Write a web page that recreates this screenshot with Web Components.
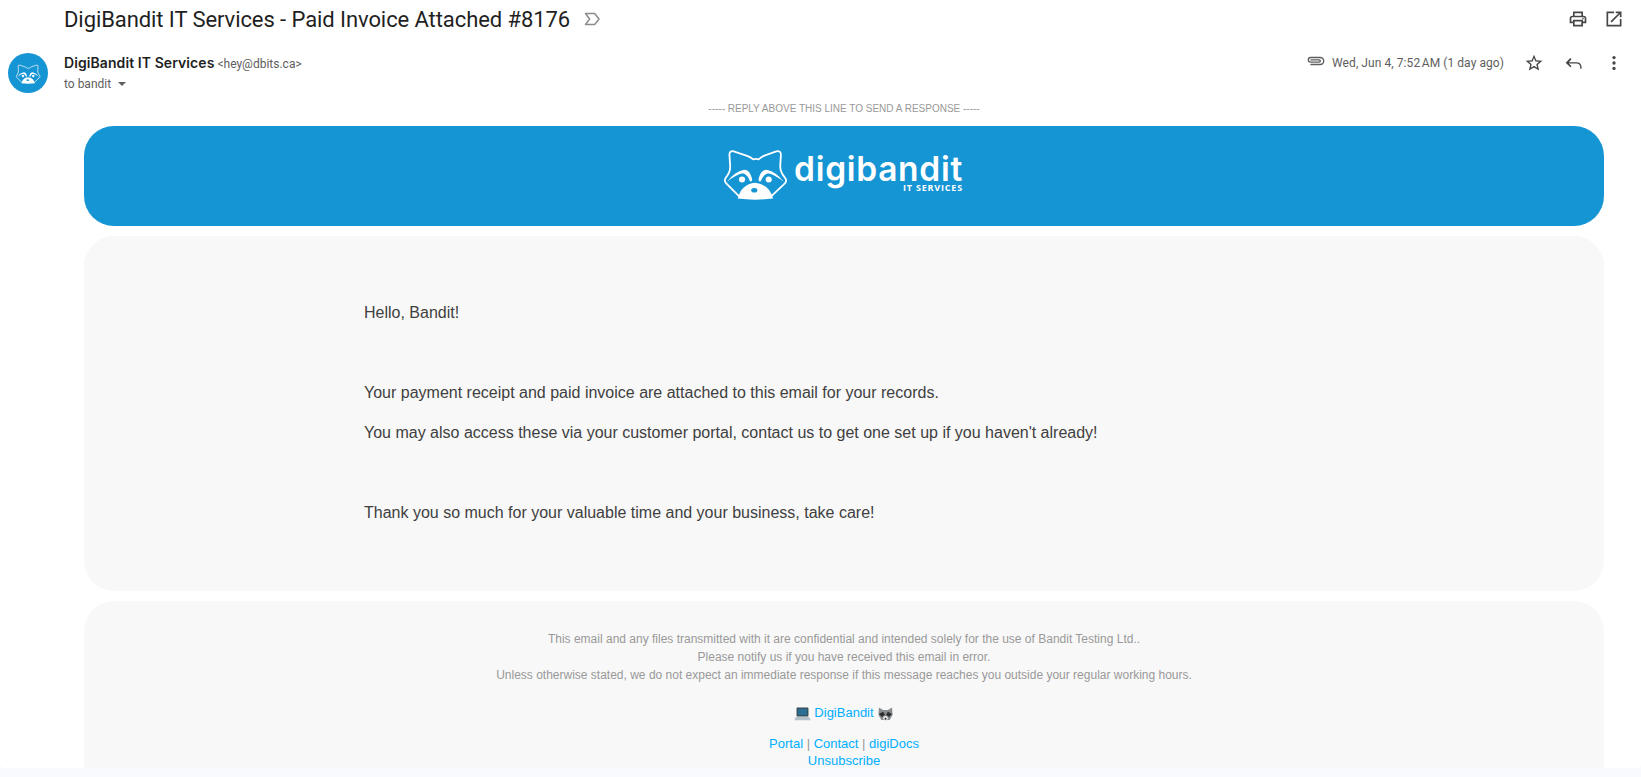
<!DOCTYPE html>
<html>
<head>
<meta http-equiv="Content-Type" content="text/html; charset=utf-8">
<title>DigiBandit IT Services - Paid Invoice Attached #8176</title>
<style>
    html, body { margin: 0; height: 100%; background: #f8fafd; overflow: hidden; }
</style>

<template id="raccoon-tpl">
    <style>
        :host { display: inline-block; line-height: 0; }
        svg { width: 100%; height: 100%; display: block; }
    </style>
    <svg viewBox="0 0 216 150">
        <path d="M62 138 L28 104 Q21 96 27 88 Q40 72 39 56 L37 24 Q37 12 49 15 L88 28 Q97 32 103 37 Q110 35 118 37 Q126 30 136 26 L167 15 Q180 12 180 24 L178 56 Q178 72 191 88 Q198 96 191 104 L155 138" fill="none" stroke="#fff" stroke-width="5" stroke-linejoin="round" stroke-linecap="round"/>
        <path d="M30 100 Q50 72 78 66 Q94 66 100 92 Q101 100 94 98 Q88 80 74 76 Q54 80 30 100 Z" fill="#fff"/>
        <path d="M188 100 Q168 72 140 66 Q124 66 118 92 Q117 100 124 98 Q130 80 144 76 Q164 80 188 100 Z" fill="#fff"/>
        <circle cx="72" cy="93" r="8.5" fill="#fff"/>
        <circle cx="146" cy="93" r="8.5" fill="#fff"/>
        <path d="M60 146 Q70 106 108 102 Q148 106 158 146 Q108 152 60 146 Z" fill="#fff"/>
        <ellipse cx="106" cy="123" rx="8.5" ry="6.5" fill="#1695d4"/>
    </svg>
</template>

<script type="text/javascript">
    // every element just clones its markup into an open shadow root
    function tplRoot(el, html) {
        el.attachShadow({mode: 'open'}).innerHTML = html;
    }

    const GICON = 'fill="#444746"';

    customElements.define('bandit-raccoon', class extends HTMLElement {
        constructor() {
            super();
            let tpl = document.getElementById('raccoon-tpl');
            this.attachShadow({mode: 'open'}).appendChild(tpl.content.cloneNode(true));
        }
    });

    customElements.define('mail-subject', class extends HTMLElement {
        constructor() {
            super();
            tplRoot(this, `
            <style>
                :host { display: flex; align-items: center; height: 38px; padding: 0 17px 0 64px; font-family: Roboto, "Liberation Sans", sans-serif; }
                h2 { margin: 0; font-size: 22px; font-weight: 400; color: #1f1f1f; white-space: nowrap; letter-spacing: -.08px; }
                .tag { margin-left: 12px; width: 20px; height: 20px; }
                .sp { flex: 1; }
                .btn { width: 20px; height: 20px; margin-left: 16px; }
            </style>
            <h2><slot></slot></h2>
            <svg class="tag" viewBox="0 0 20 20"><path d="M3.5 4.5h9.2l4.3 5.5-4.3 5.5H3.5L7.6 10z" fill="none" stroke="#8a8c8e" stroke-width="1.5" stroke-linejoin="round"/></svg>
            <span class="sp"></span>
            <svg class="btn" viewBox="0 0 24 24" ${GICON}><path d="M19 8h-1V3H6v5H5c-1.66 0-3 1.34-3 3v6h4v4h12v-4h4v-6c0-1.66-1.34-3-3-3zM8 5h8v3H8V5zm8 14H8v-4h8v4zm4-4h-2v-2H6v2H4v-4c0-.55.45-1 1-1h14c.55 0 1 .45 1 1v4z"/><circle cx="18" cy="11.5" r="1"/></svg>
            <svg class="btn" viewBox="0 0 24 24" ${GICON}><path d="M19 19H5V5h7V3H3v18h18v-9h-2v7zM14 3v2h3.59l-9.83 9.83 1.41 1.41L19 6.41V10h2V3h-7z"/></svg>
            `);
        }
    });

    customElements.define('mail-sender', class extends HTMLElement {
        constructor() {
            super();
            tplRoot(this, `
            <style>
                :host { display: flex; height: 47px; padding: 15px 17px 0 8px; font-family: Roboto, "Liberation Sans", sans-serif; color: #5e5e5e; }
                .avatar { width: 40px; height: 40px; border-radius: 50%; background: #1695d4; display: flex; align-items: center; justify-content: center; margin-right: 16px; }
                bandit-raccoon { width: 30px; height: 21px; }
                .who { line-height: 20px; font-size: 12px; }
                .name { font-family: Inter, Roboto, sans-serif; font-size: 14px; font-weight: 600; letter-spacing: .08px; color: #1f1f1f; }
                .to { display: flex; align-items: center; }
                .to i { width: 0; height: 0; margin-left: 7px; border: 4px solid transparent; border-top: 4px solid #5e5e5e; border-bottom: 0; }
                .sp { flex: 1; }
                .right { display: flex; align-items: center; height: 20px; font-size: 12px; }
                .clip { width: 20px; height: 20px; margin-right: 7px; }
                .when { letter-spacing: .07px; }
                .ic { width: 20px; height: 20px; margin-left: 20px; }
            </style>
            <div class="avatar"><bandit-raccoon></bandit-raccoon></div>
            <div class="who">
                <div><span class="name">DigiBandit IT Services</span> &lt;hey@dbits.ca&gt;</div>
                <div class="to">to bandit<i></i></div>
            </div>
            <span class="sp"></span>
            <div class="right">
                <svg class="clip" viewBox="0 0 20 20"><path d="M6 14.5h9.2a3.1 3.1 0 0 0 0-7H5.6a2.3 2.3 0 0 0 0 4.6h8.6a1.1 1.1 0 0 0 0-2.2H6" transform="translate(0 -3)" fill="none" stroke="#5e5e5e" stroke-width="1.4" stroke-linecap="round"/></svg>
                <span class="when">Wed, Jun 4, 7:52&#8239;AM (1 day ago)</span>
                <svg class="ic" viewBox="0 0 24 24" ${GICON}><path d="M22 9.24l-7.19-.62L12 2 9.19 8.63 2 9.24l5.46 4.73L5.82 21 12 17.27 18.18 21l-1.63-7.03L22 9.24zM12 15.4l-3.76 2.27 1-4.28-3.32-2.88 4.38-.38L12 6.1l1.71 4.04 4.38.38-3.32 2.88 1 4.28L12 15.4z"/></svg>
                <svg class="ic" viewBox="0 0 24 24" ${GICON}><path d="M9 7.4 7.6 6 2 11.6l5.6 5.6L9 15.8l-3.2-3.2H15c2.8 0 4.5 1.7 4.5 4.5V19h1.6v-1.9c0-3.8-2.3-6.1-6.1-6.1H5.8z"/></svg>
                <svg class="ic" viewBox="0 0 24 24" ${GICON}><circle cx="12" cy="5.5" r="2"/><circle cx="12" cy="12" r="2"/><circle cx="12" cy="18.5" r="2"/></svg>
            </div>
            `);
        }
    });

    customElements.define('bandit-banner', class extends HTMLElement {
        constructor() {
            super();
            tplRoot(this, `
            <style>
                :host { display: flex; align-items: center; justify-content: center; height: 100px; border-radius: 30px; background: #1695d4; color: #fff; }
                .logo { display: flex; align-items: flex-start; height: 54px; margin: 0 9px 6px 0; }
                bandit-raccoon { width: 78px; height: 54px; }
                .txt { display: flex; flex-direction: column; align-items: flex-end; margin-top: 5px; font-family: Inter, Lato, sans-serif; }
                .big { font-size: 33.5px; font-weight: 600; line-height: 36px; letter-spacing: .7px; }
                .small { font-family: "Open Sans", sans-serif; font-size: 9px; font-weight: 700; line-height: 9px; letter-spacing: .8px; margin-top: -4px; }
            </style>
            <div class="logo">
                <bandit-raccoon></bandit-raccoon>
                <div class="txt"><span class="big">digibandit</span><span class="small">IT SERVICES</span></div>
            </div>
            `);
        }
    });

    customElements.define('mail-card', class extends HTMLElement {
        constructor() {
            super();
            tplRoot(this, `
            <style>
                :host { display: block; background: #f8f8f8; border-radius: 30px; }
            </style>
            <slot></slot>
            `);
        }
    });

    customElements.define('mail-message', class extends HTMLElement {
        constructor() {
            super();
            tplRoot(this, `
            <style>
                :host { display: block; height: 355px; box-sizing: border-box; padding: 65px 0 0 280px; font: 16px/24px "Liberation Sans", Arial, sans-serif; color: #404040; }
                ::slotted(p) { margin: 0 0 16px; }
                ::slotted(.gap) { height: 24px; }
            </style>
            <slot></slot>
            `);
        }
    });

    customElements.define('mail-footer', class extends HTMLElement {
        constructor() {
            super();
            tplRoot(this, `
            <style>
                :host { display: block; box-sizing: border-box; height: 200px; padding: 29px 0 0; text-align: center; font: 12px/18px "Liberation Sans", Arial, sans-serif; color: #999; }
                .site { margin-top: 20px; display: flex; align-items: center; justify-content: center; gap: 2px; height: 18px; font-size: 13px; }
                .site svg { width: 19px; height: 19px; }
                .links { margin-top: 13px; font-size: 13px; line-height: 17px; }
                a { color: #00aeff; text-decoration: none; }
            </style>
            <div>This email and any files transmitted with it are confidential and intended solely for the use of Bandit Testing Ltd..</div>
            <div>Please notify us if you have received this email in error.</div>
            <div>Unless otherwise stated, we do not expect an immediate response if this message reaches you outside your regular working hours.</div>
            <div class="site">
                <svg viewBox="0 0 16 16"><rect x="3" y="3" width="10" height="7.5" rx=".8" fill="#37474f"/><rect x="4" y="4" width="8" height="5.5" fill="#2b6f94"/><path d="M2.5 11h11L15 13.6H1z" fill="#b4c2cb"/></svg>
                <a href="#">DigiBandit</a>
                <svg viewBox="0 0 16 16"><path d="M2.5 3 6 5h4l3.5-2 .5 6-2.5 4.5h-7L2 9z" fill="#8a8d90"/><path d="M2.5 8.5 6 6.5 7.5 9l-2.5 2zM13.5 8.5 10 6.5 8.5 9l2.5 2z" fill="#2b2d30"/><path d="M6 12a2 2 0 0 1 4 0l-1 2H7z" fill="#e6e6e6"/><circle cx="8" cy="12.4" r=".8" fill="#222"/></svg>
            </div>
            <div class="links"><a href="#">Portal</a> | <a href="#">Contact</a> | <a href="#">digiDocs</a><br><a href="#">Unsubscribe</a></div>
            `);
        }
    });

    customElements.define('gmail-view', class extends HTMLElement {
        constructor() {
            super();
            tplRoot(this, `
            <style>
                :host { display: block; height: 768px; overflow: hidden; background: #fff; border-radius: 0 0 4px 4px; }
                .reply { text-align: center; font: 10px/14px "Liberation Sans", Arial, sans-serif; color: #999; padding: 2px 37px 0 84px; height: 26px; box-sizing: border-box; }
                .body { display: flex; flex-direction: column; gap: 10px; padding: 0 37px 0 84px; }
            </style>
            <mail-subject>DigiBandit IT Services - Paid Invoice Attached #8176</mail-subject>
            <mail-sender></mail-sender>
            <div class="reply">----- REPLY ABOVE THIS LINE TO SEND A RESPONSE -----</div>
            <div class="body">
                <bandit-banner></bandit-banner>
                <mail-card><slot></slot></mail-card>
                <mail-card><mail-footer></mail-footer></mail-card>
            </div>
            `);
        }
    });
</script>
</head>
<body>
<gmail-view>
    <mail-message>
        <p>Hello, Bandit!</p>
        <p class="gap"></p>
        <p>Your payment receipt and paid invoice are attached to this email for your records.</p>
        <p>You may also access these via your customer portal, contact us to get one set up if you haven't already!</p>
        <p class="gap"></p>
        <p>Thank you so much for your valuable time and your business, take care!</p>
    </mail-message>
</gmail-view>
</body>
</html>
